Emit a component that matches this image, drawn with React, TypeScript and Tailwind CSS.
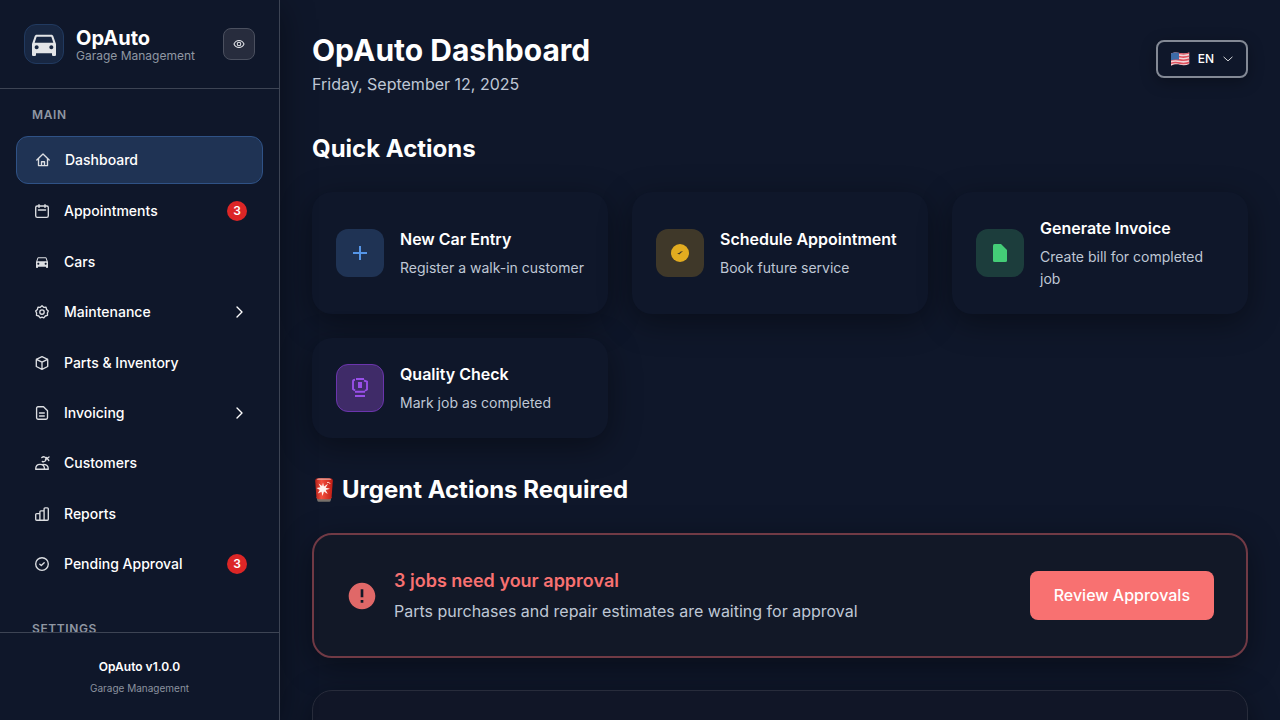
import type { ReactNode } from "react";
import { MdDirectionsCar, MdError } from "react-icons/md";

function LineIcon({ children, size = 16 }: { children: ReactNode; size?: number }) {
  return (
    <svg
      width={size}
      height={size}
      viewBox="0 0 16 16"
      fill="none"
      stroke="currentColor"
      strokeWidth="1.350"
      strokeLinecap="round"
      strokeLinejoin="round"
      aria-hidden="true"
      className="shrink-0"
    >
      {children}
    </svg>
  );
}

const icons = {
  home: (
    <LineIcon>
      <path d="M1.800 8 8 2 14.200 8M3.500 6.800v6.800h9V6.800M6.500 13.400V9.700h3v3.700" />
    </LineIcon>
  ),
  calendar: (
    <LineIcon>
      <rect x="1.700" y="3" width="12.600" height="11.300" rx="1.600" />
      <path d="M5 1.600V4.400M11 1.600V4.400M4.400 7h7.200" />
    </LineIcon>
  ),
  car: <MdDirectionsCar size={16} aria-hidden="true" className="shrink-0" />,
  gear: (
    <LineIcon>
      <path d="M8 1.800 9.700 3.300 12 3.200 12.600 5.500 14.300 7 13.400 9 13.500 11.300 11.300 12 9.800 13.900 8 13.200 6.200 13.900 4.700 12 2.500 11.300 2.600 9 1.700 7 3.400 5.500 4 3.200 6.300 3.300Z" />
      <circle cx="8" cy="8" r="2.200" />
    </LineIcon>
  ),
  box: (
    <LineIcon>
      <path d="M8 1.700 13.700 4.300V11.500L8 14.300 2.300 11.500V4.300ZM2.300 4.300 8 7.200 13.700 4.300M8 7.200V14.300" />
    </LineIcon>
  ),
  invoice: (
    <LineIcon>
      <path d="M4 1.700h5.500l4 4v7.100a1.400 1.400 0 0 1-1.400 1.400H4a1.400 1.400 0 0 1-1.400-1.400V3.100A1.400 1.400 0 0 1 4 1.700ZM5.500 8h4.800M5.500 11h4.800" />
    </LineIcon>
  ),
  customers: (
    <LineIcon>
      <path d="M1.700 14.200c0-3.300 1.800-4.800 4.300-4.800s4.500 1.500 4.500 4.800ZM9 9.400c3 0 5.300 1.500 5.300 4.800h-3.800M7.800 2.600C9.500 1.200 11.500 1.700 12 3.500c.5 2-1.500 3.800-3.700 3M11.500 4.500 15 2M12.500 2.500l2.300 3" />
    </LineIcon>
  ),
  reports: (
    <LineIcon>
      <path d="M1.700 8.600A1 1 0 0 1 2.700 7.600H5.900V14.200H2.700a1 1 0 0 1-1-1ZM5.900 14.200V5.800a1 1 0 0 1 1-1h3.200v9.400ZM10.100 14.200V2.800a1 1 0 0 1 1-1h2.200a1 1 0 0 1 1 1v10.400a1 1 0 0 1-1 1ZM5.900 14.200h4.200" />
    </LineIcon>
  ),
  approval: (
    <LineIcon>
      <circle cx="8" cy="8" r="6.300" />
      <path d="m5.800 8.200 1.500 1.300 2.900-2.800" />
    </LineIcon>
  ),
};

function SirenIcon() {
  return (
    <svg width="24" height="26" viewBox="0 0 24 26" role="img" aria-label="Siren" className="shrink-0">
      <defs>
        <linearGradient id="siren-glass" x1="0" y1="0" x2="1" y2="0">
          <stop offset="0" stopColor="#b3211a" />
          <stop offset="0.350" stopColor="#f4503e" />
          <stop offset="1" stopColor="#c11d14" />
        </linearGradient>
      </defs>
      <path d="M4.500 20h15l-.8 3.600q-.2 1.200-1.500 1.200H6.800q-1.300 0-1.500-1.200Z" fill="#77716b" />
      <path d="M3.200 4Q3.200 1.300 6 1.300h12q2.800 0 2.800 2.700l-1.200 16.200q-.2 2-2.200 2H6.600q-2 0-2.200-2Z" fill="url(#siren-glass)" />
      <path d="M4.800 2.800Q5.300 1.400 7 1.400h10q1.700 0 2.200 1.400Z" fill="#e9a69c" />
      <path d="m11 5.500 1 4 4-2.700-2.300 4 4.300 1-4.300 1.200 2 4-3.700-2.400-1.500 4.400-1-4.300-3.700 1.800 2-3.600L4.500 11l3.900-.7-1.800-3.700 3.500 2.300Z" fill="#fff2ef" />
      <path d="M15 5.500q2.500-1 3.200 1.500" fill="none" stroke="#ffc7bd" strokeWidth="1" />
    </svg>
  );
}

function UsFlag() {
  return (
    <svg width="20" height="16" viewBox="0 0 20 16" aria-hidden="true" className="shrink-0">
      <defs>
        <clipPath id="flag-shape">
          <path d="M1 2.500C4.500 1 7 1.200 10 2s6 .6 9.200-.6V13c-3 1.500-6.200 1.500-9.200.8s-5.500-.7-9 .9Z" />
        </clipPath>
      </defs>
      <g clipPath="url(#flag-shape)">
        <path d="M0 0h20v16H0Z" fill="#f1d5d8" />
        <path
          d="M0 3C4 1.300 7 1.800 10 2.500s6 .6 10-.8M0 6.200c4-1.700 7-1.200 10-.5s6 .6 10-.8M0 9.400c4-1.700 7-1.200 10-.5s6 .6 10-.8M0 12.600c4-1.700 7-1.200 10-.5s6 .6 10-.8M0 15.600c4-1.700 7-1.200 10-.5s6 .6 10-.8"
          fill="none"
          stroke="#e0525f"
          strokeWidth="1.600"
        />
        <path d="M0 1h9v7.700c-3-.6-6-.2-9 1Z" fill="#3d6ba8" />
      </g>
    </svg>
  );
}

type NavItem = { label: string; icon: ReactNode; badge?: number; expandable?: boolean };

const navItems: NavItem[] = [
  { label: "Appointments", icon: icons.calendar, badge: 3 },
  { label: "Cars", icon: icons.car },
  { label: "Maintenance", icon: icons.gear, expandable: true },
  { label: "Parts & Inventory", icon: icons.box },
  { label: "Invoicing", icon: icons.invoice, expandable: true },
  { label: "Customers", icon: icons.customers },
  { label: "Reports", icon: icons.reports },
  { label: "Pending Approval", icon: icons.approval, badge: 3 },
];

function NavRow({ item }: { item: NavItem }) {
  const body = (
    <>
      <span className="flex w-5 justify-center text-[#dcdee2]">{item.icon}</span>
      <span className="flex-1 text-left">{item.label}</span>
      {item.badge !== undefined && (
        <span className="flex size-5 items-center justify-center rounded-full bg-[#dc2626] text-xs font-semibold">
          {item.badge}
        </span>
      )}
      {item.expandable && (
        <LineIcon>
          <path d="m6 3 5 5-5 5" />
        </LineIcon>
      )}
    </>
  );
  const row = "flex w-full items-center gap-3 rounded-xl px-4 py-3 text-sm leading-[22px] font-medium text-white";
  return (
    <li>
      {item.expandable ? (
        <button type="button" aria-expanded="false" className={row}>
          {body}
        </button>
      ) : (
        <a href="#" className={row}>
          {body}
        </a>
      )}
    </li>
  );
}

function Sidebar() {
  return (
    <aside className="relative z-10 flex w-70 shrink-0 flex-col border-r border-[#3d4454] bg-[#0f172a] shadow-[0_8px_32px_rgba(0,0,0,0.4)]">
      <header className="flex items-center gap-3 border-b border-[#3d4454] p-6">
        <div className="flex size-10 items-center justify-center rounded-xl border border-[#213a60] bg-[#182742] text-[#e3e5e8]">
          <MdDirectionsCar size={32} aria-hidden="true" className="shrink-0" />
        </div>
        <div className="flex-1 pt-1">
          <p className="text-xl leading-5 font-bold text-white">OpAuto</p>
          <p className="text-xs leading-4 text-[#9097a3]">Garage Management</p>
        </div>
        <button
          type="button"
          aria-label="Toggle sidebar"
          className="flex size-8 items-center justify-center rounded-lg border border-[#4b505f] bg-[#272c3d] text-gray-200"
        >
          <LineIcon size={12}>
            <path d="M1.300 8C2.700 5 5.100 3.300 8 3.300S13.300 5 14.700 8C13.300 11 10.900 12.700 8 12.700S2.700 11 1.300 8Z" />
            <circle cx="8" cy="8" r="2.400" />
          </LineIcon>
        </button>
      </header>
      <nav aria-label="Main" className="min-h-0 flex-1 overflow-hidden px-4 pt-4">
        <h2 className="mb-[11px] px-4 text-xs leading-5 font-semibold tracking-wider text-[#9097a3]">MAIN</h2>
        <ul className="flex min-h-[451px] flex-col justify-between">
          <li>
            <a
              href="#"
              aria-current="page"
              className="flex items-center gap-3 rounded-xl border border-[#2f5286] bg-[#1f3354] px-4 py-3 text-sm leading-[22px] font-medium text-white"
            >
              <span className="flex w-5 justify-center text-[#dcdee2]">{icons.home}</span>
              Dashboard
            </a>
          </li>
          {navItems.map((item) => (
            <NavRow key={item.label} item={item} />
          ))}
        </ul>
        <h2 className="mt-8 px-4 text-xs leading-5 font-semibold tracking-wider text-[#9097a3]">SETTINGS</h2>
      </nav>
      <footer className="border-t border-[#3d4454] p-6 text-center">
        <p className="text-xs leading-5 font-semibold text-white">OpAuto v1.0.0</p>
        <p className="mt-[3px] text-[10px] leading-4 text-[#8b929f]">Garage Management</p>
      </footer>
    </aside>
  );
}

const actions = [
  {
    title: "New Car Entry",
    text: "Register a walk-in customer",
    tile: "bg-[#1f3354] text-[#5596e8]",
    icon: <path d="M12 5v14M5 12h14" stroke="currentColor" strokeWidth="2" />,
  },
  {
    title: "Schedule Appointment",
    text: "Book future service",
    tile: "bg-[#3f3829] text-[#e2ac20]",
    icon: (
      <>
        <circle cx="12" cy="12" r="9" fill="currentColor" />
        <path d="m9.100 11.900 2.100 1.700 3.900-3.600-2.900.8-1 1.200Z" fill="#3f3829" />
      </>
    ),
  },
  {
    title: "Generate Invoice",
    text: "Create bill for completed job",
    tile: "bg-[#1c3d3c] text-[#44cd77]",
    icon: <path d="M6.500 3H13l6 6v10.500a1.500 1.500 0 0 1-1.500 1.500h-11A1.500 1.500 0 0 1 5 19.500v-15A1.500 1.500 0 0 1 6.500 3Z" fill="currentColor" />,
  },
  {
    title: "Quality Check",
    text: "Mark job as completed",
    tile: "border border-[#6b35ad] bg-[#3f2b68] text-[#984fe8]",
    icon: (
      <>
        <path
          d="M8 3h8M7 3.800Q5 3.800 5 5.500V13l2 1.500M16 4.500l3 1.200V13.500l-2 1.200M7 15.700h10M7 20h10"
          fill="none"
          stroke="currentColor"
          strokeWidth="1.900"
        />
        <path d="M10 6h4v6h-4Z" fill="currentColor" />
      </>
    ),
  },
];

function QuickActions() {
  return (
    <section aria-labelledby="quick-title" className="mt-8">
      <h2 id="quick-title" className="text-2xl leading-[42px] font-bold">Quick Actions</h2>
      <div className="mt-[22px] grid grid-cols-3 gap-6">
        {actions.map((action) => (
          <button
            key={action.title}
            type="button"
            className="flex items-center gap-4 rounded-[20px] bg-[#0f172a] p-6 text-left shadow-[0_8px_32px_rgba(0,0,0,0.4)]"
          >
            <span className={`flex size-12 shrink-0 items-center justify-center rounded-xl ${action.tile}`}>
              <svg width="24" height="24" viewBox="0 0 24 24" aria-hidden="true">
                {action.icon}
              </svg>
            </span>
            <span>
              <span className="block text-base leading-6 font-semibold">{action.title}</span>
              <span className="mt-1.5 block text-sm leading-[22px] text-[#bfc7d5]">{action.text}</span>
            </span>
          </button>
        ))}
      </div>
    </section>
  );
}

function UrgentActions() {
  return (
    <section aria-labelledby="urgent-title" className="mt-8">
      <h2 id="urgent-title" className="flex items-center gap-1.5 text-2xl leading-[39px] font-bold">
        <SirenIcon />
        Urgent Actions Required
      </h2>
      <div className="mt-6 flex items-center gap-4 rounded-[20px] border-2 border-[#713a45] bg-[#121827] p-8 shadow-[0_8px_32px_rgba(0,0,0,0.4)]">
        <MdError size={32} aria-hidden="true" className="shrink-0 text-[#e06868]" />
        <div className="flex-1">
          <h3 className="text-lg leading-7 font-semibold text-[#f87171]">3 jobs need your approval</h3>
          <p className="mt-[3px] text-base leading-[26px] text-[#bfc7d5]">
            Parts purchases and repair estimates are waiting for approval
          </p>
        </div>
        <button type="button" className="rounded-lg bg-[#f87171] px-6 py-3 text-base leading-[25px] font-medium">
          Review Approvals
        </button>
      </div>
      <div className="mt-8 min-h-48 rounded-[20px] border border-[#282c3b] bg-[#111627] shadow-[0_8px_32px_rgba(0,0,0,0.4)]" />
    </section>
  );
}

export default function App() {
  return (
    <div className="flex h-screen overflow-hidden bg-[#0f172a] font-['Inter',sans-serif] text-white">
      <Sidebar />
      <main className="min-w-0 flex-1 overflow-hidden p-8">
        <header className="flex items-start justify-between">
          <div>
            <h1 className="text-3xl leading-9 font-bold">OpAuto Dashboard</h1>
            <p className="mt-1 text-base leading-6 text-[#bfc7d5]">Friday, September 12, 2025</p>
          </div>
          <button
            type="button"
            aria-haspopup="listbox"
            className="mt-2 flex items-center gap-2 rounded-lg border-2 border-[#838995] bg-[#0f172a] px-3 py-2 text-xs leading-[18px] font-medium shadow-[0_4px_16px_rgba(0,0,0,0.3)]"
          >
            <UsFlag />
            EN
            <LineIcon size={12}>
              <path d="m2.500 5.500 5.500 5 5.500-5" strokeWidth="1.100" />
            </LineIcon>
          </button>
        </header>
        <QuickActions />
        <UrgentActions />
      </main>
    </div>
  );
}
